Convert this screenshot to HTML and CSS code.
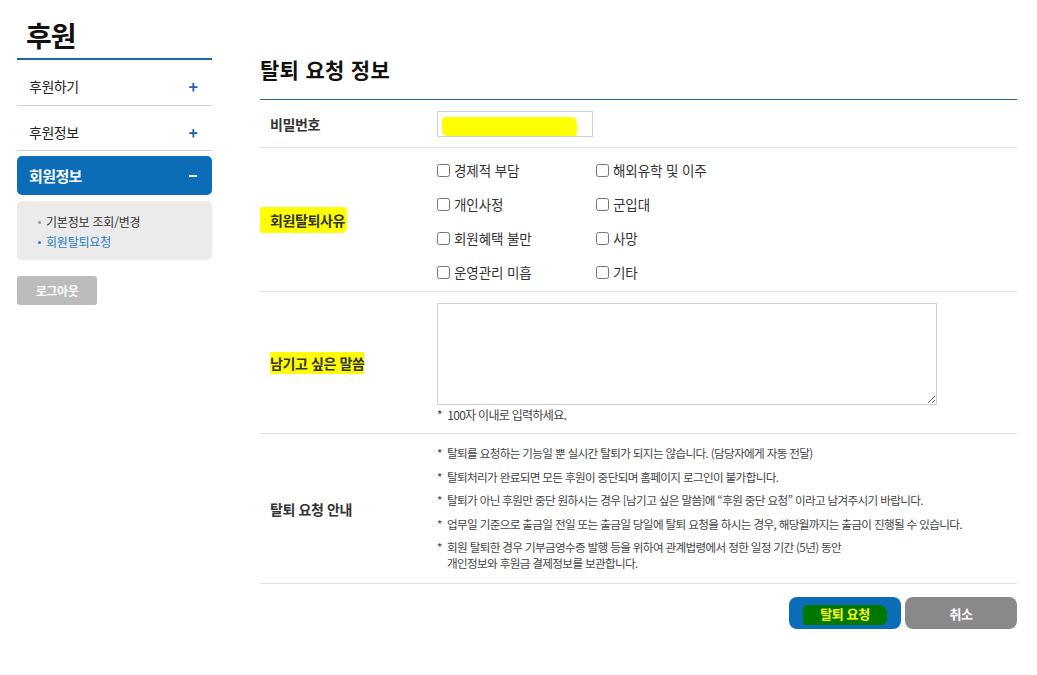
FILE: index.html
```html
<!DOCTYPE html>
<html lang="ko">
<head>
<meta charset="utf-8">
<title>회원탈퇴요청</title>
<link rel="stylesheet" href="styles.css">
</head>
<body>
<div class="page">
  <aside class="side">
    <h1 class="side-title">후원</h1>
    <ul class="menu">
      <li class="menu-item"><span>후원하기</span><span class="pm">+</span></li>
      <li class="menu-item"><span>후원정보</span><span class="pm">+</span></li>
    </ul>
    <div class="menu-active"><span>회원정보</span><span class="minus"></span></div>
    <ul class="submenu">
      <li>기본정보 조회/변경</li>
      <li class="on">회원탈퇴요청</li>
    </ul>
    <button class="logout" type="button">로그아웃</button>
  </aside>

  <main class="main">
    <h2 class="main-title">탈퇴 요청 정보</h2>
    <div class="form">
      <div class="row row-pw">
        <div class="label">비밀번호</div>
        <div class="value">
          <div class="pw-box"><span class="scribble"></span></div>
        </div>
      </div>

      <div class="row row-reason">
        <div class="label"><span class="hl hl-reason">회원탈퇴사유</span></div>
        <div class="value">
          <div class="checks">
            <label class="check"><input type="checkbox"><span>경제적 부담</span></label>
            <label class="check"><input type="checkbox"><span>해외유학 및 이주</span></label>
            <label class="check"><input type="checkbox"><span>개인사정</span></label>
            <label class="check"><input type="checkbox"><span>군입대</span></label>
            <label class="check"><input type="checkbox"><span>회원혜택 불만</span></label>
            <label class="check"><input type="checkbox"><span>사망</span></label>
            <label class="check"><input type="checkbox"><span>운영관리 미흡</span></label>
            <label class="check"><input type="checkbox"><span>기타</span></label>
          </div>
        </div>
      </div>

      <div class="row row-msg">
        <div class="label"><span class="hl hl-msg">남기고 싶은 말씀</span></div>
        <div class="value">
          <textarea class="msg"></textarea>
          <p class="note">*&nbsp; 100자 이내로 입력하세요.</p>
        </div>
      </div>

      <div class="row row-guide">
        <div class="label">탈퇴 요청 안내</div>
        <div class="value">
          <ul class="guide">
            <li>탈퇴를 요청하는 기능일 뿐 실시간 탈퇴가 되지는 않습니다. (담당자에게 자동 전달)</li>
            <li>탈퇴처리가 완료되면 모든 후원이 중단되며 홈페이지 로그인이 불가합니다.</li>
            <li>탈퇴가 아닌 후원만 중단 원하시는 경우 [남기고 싶은 말씀]에 “후원 중단 요청” 이라고 남겨주시기 바랍니다.</li>
            <li>업무일 기준으로 출금일 전일 또는 출금일 당일에 탈퇴 요청을 하시는 경우, 해당월까지는 출금이 진행될 수 있습니다.</li>
            <li>회원 탈퇴한 경우 기부금영수증 발행 등을 위하여 관계법령에서 정한 일정 기간 (5년) 동안<br>개인정보와 후원금 결제정보를 보관합니다.</li>
          </ul>
        </div>
      </div>
    </div>

    <div class="actions">
      <button class="btn btn-submit" type="button"><span class="btn-mark">탈퇴 요청</span></button>
      <button class="btn btn-cancel" type="button">취소</button>
    </div>
  </main>
</div>
</body>
</html>
```

FILE: styles.css
```css
* { box-sizing: border-box; }

html, body {
  margin: 0;
  padding: 0;
  background: #ffffff;
}

body {
  font-family: "Noto Sans CJK KR", "Noto Sans", sans-serif;
  color: #222;
  font-size: 13px;
}

ul { list-style: none; margin: 0; padding: 0; }

.page {
  display: flex;
  gap: 48px;
  padding-left: 17px;
  width: 1037px;
}

/* ---------- sidebar ---------- */
.side {
  width: 195px;
  flex: none;
  padding-top: 20px;
  display: flex;
  flex-direction: column;
}

.side-title {
  margin: 0;
  padding: 0 0 8px 9px;
  font-size: 28px;
  line-height: 30px;
  font-weight: 700;
  color: #111;
  letter-spacing: -1px;
  border-bottom: 2px solid #1a67a8;
}

.menu-item {
  display: flex;
  justify-content: space-between;
  align-items: center;
  padding: 16px 12px 9px 12px;
  line-height: 20px;
  font-size: 14px;
  color: #222;
  letter-spacing: -0.5px;
  border-bottom: 1px solid #cfcfcf;
}

.menu-item + .menu-item {
  padding-bottom: 8px;
}

.pm {
  color: #1a67a8;
  font-weight: 700;
  font-size: 16px;
  line-height: 20px;
  letter-spacing: 0;
  margin-right: 2px;
}

.menu-active {
  margin-top: 5px;
  height: 39px;
  background: #0b6db8;
  border-radius: 5px;
  display: flex;
  justify-content: space-between;
  align-items: center;
  padding: 0 13px 0 12px;
  color: #fff;
  font-weight: 700;
  font-size: 15px;
  letter-spacing: -0.6px;
}

.minus {
  width: 8px;
  height: 2px;
  background: #fff;
  margin-right: 2px;
}

.submenu {
  margin-top: 6px;
  background: #ebebeb;
  border-radius: 5px;
  padding: 11px 0 8px 21px;
}

.submenu li {
  line-height: 20px;
  font-size: 12px;
  color: #333;
  letter-spacing: -0.2px;
  display: flex;
  align-items: center;
}

.submenu li::before {
  content: "";
  width: 3px;
  height: 3px;
  border-radius: 50%;
  background: #999;
  margin-right: 5px;
}

.submenu li.on { color: #2a7bc2; }
.submenu li.on::before { background: #2a7bc2; }

.logout {
  margin-top: 16px;
  width: 80px;
  height: 29px;
  border: 0;
  border-radius: 3px;
  background: #bcbcbc;
  color: #fff;
  font-family: inherit;
  font-weight: 700;
  font-size: 12px;
  letter-spacing: -0.4px;
  padding: 0;
}

/* ---------- main ---------- */
.main {
  width: 757px;
  flex: none;
  padding-top: 55px;
}

.main-title {
  margin: 0 0 16px 0;
  font-size: 21px;
  line-height: 28px;
  font-weight: 700;
  color: #111;
  letter-spacing: 0.3px;
}

.form {
  border-top: 1px solid #1b6396;
}

.row {
  display: grid;
  grid-template-columns: 177px 1fr;
  border-bottom: 1px solid #e3e3e3;
}

.label {
  align-self: center;
  padding-left: 10px;
  font-weight: 700;
  font-size: 14px;
  color: #333;
  letter-spacing: -0.4px;
  line-height: 20px;
}

.hl {
  background: #ffff00;
}

.hl-reason {
  margin-left: -10px;
  padding: 3px 2px 3px 10px;
  border-radius: 2px 4px 5px 3px;
}

.hl-msg {
  padding: 1px 0;
}

.value { min-width: 0; }

/* password */
.row-pw .value { padding: 11px 0 10px 0; }

.pw-box {
  width: 156px;
  height: 26px;
  border: 1px solid #c7d4de;
  padding: 5px 0 0 4px;
}

.scribble {
  display: block;
  width: 135px;
  height: 19px;
  background: #ffff00;
  border-radius: 3px 6px 2px 5px;
}

/* checkboxes */
.row-reason .value { padding: 5px 0 2px 0; }

.checks {
  display: grid;
  grid-template-columns: 159px 200px;
  grid-auto-rows: 34px;
}

.check {
  display: flex;
  align-items: center;
  font-size: 13.5px;
  color: #333;
  letter-spacing: -0.1px;
}

.check input {
  margin: 1px 4px 0 0;
  width: 13px;
  height: 13px;
}

/* message */
.row-msg .value { padding: 11px 0 10px 0; }

.msg {
  display: block;
  width: 500px;
  height: 102px;
  border: 1px solid #c7d4de;
  border-radius: 0;
  margin: 0;
  resize: both;
  font-family: inherit;
}

.note {
  margin: 2px 0 0 0;
  font-size: 12px;
  line-height: 16px;
  color: #444;
  letter-spacing: -0.7px;
}

/* guide */
.row-guide .value { padding: 11px 0 12px 0; }

.guide li {
  position: relative;
  padding-left: 10px;
  font-size: 11.6px;
  line-height: 16px;
  color: #444;
  letter-spacing: -0.65px;
  margin-bottom: 7.5px;
}

.guide li:last-child { margin-bottom: 0; }

.guide li::before {
  content: "*";
  position: absolute;
  left: 0;
  top: 0;
}

/* actions */
.actions {
  display: flex;
  justify-content: flex-end;
  gap: 4px;
  margin-top: 13px;
}

.btn {
  width: 112px;
  height: 32px;
  border: 0;
  border-radius: 8px;
  font-family: inherit;
  font-weight: 700;
  font-size: 13px;
  color: #fff;
  letter-spacing: -0.4px;
  padding: 0;
}

.btn-submit {
  background: #0b6db8;
  display: flex;
  align-items: center;
  justify-content: center;
  padding-top: 3px;
}

.btn-mark {
  display: block;
  width: 84px;
  height: 20px;
  line-height: 18px;
  background: #007800;
  color: #ffff00;
  border-radius: 4px 8px 6px 3px;
}

.btn-cancel {
  background: #898989;
}
```
